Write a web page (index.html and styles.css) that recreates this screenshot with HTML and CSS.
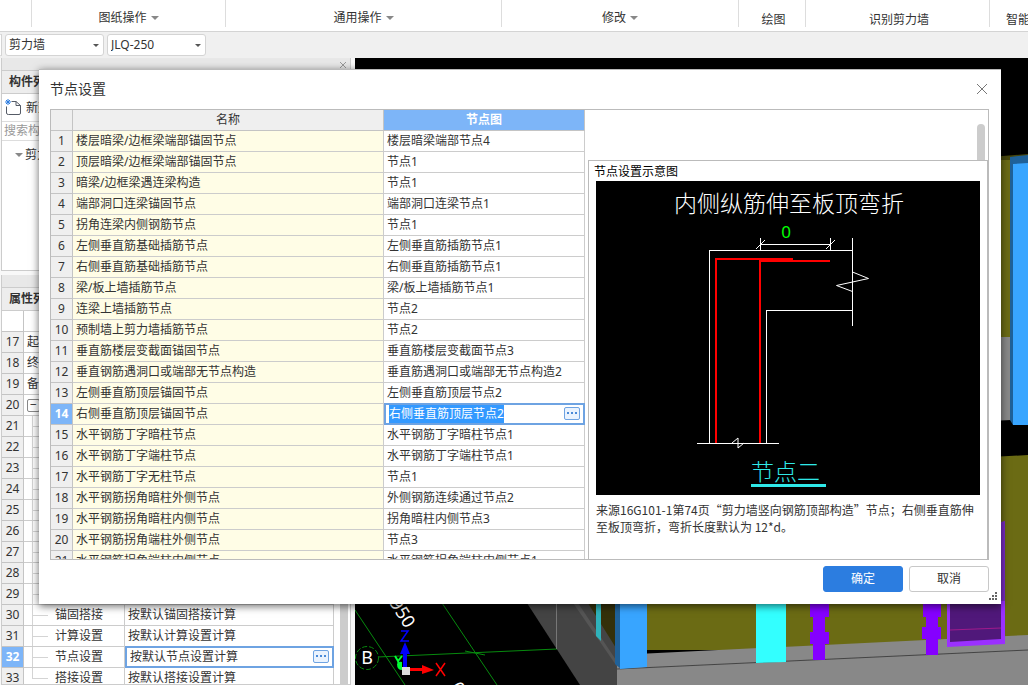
FILE: index.html
```html
<!DOCTYPE html>
<html lang="zh-CN">
<head>
  <meta charset="UTF-8" />
  <meta name="viewport" content="width=device-width, initial-scale=1.0"/>
  <title>节点设置</title>
  <link rel="stylesheet" href="styles.css">
</head>
<body>

  <nav class="ribbon">
    <div class="ribbon-group"></div>
    <div class="ribbon-group"><button class="ribbon-button">图纸操作 <i class="caret"></i></button></div>
    <div class="ribbon-group"><button class="ribbon-button">通用操作 <i class="caret"></i></button></div>
    <div class="ribbon-group"><button class="ribbon-button">修改 <i class="caret"></i></button></div>
    <div class="ribbon-group plain">绘图</div>
    <div class="ribbon-group plain">识别剪力墙</div>
    <div class="ribbon-group plain last">智能布置</div>
  </nav>

  <div class="toolbar">
    <span class="combo-end"></span>
    <label class="combo"><select aria-label="构件类型"><option>剪力墙</option></select></label>
    <label class="combo"><select aria-label="构件名称"><option>JLQ-250</option></select></label>
  </div>

  <div class="workspace">
    <aside class="sidebar">
      <section class="panel components">
        <div class="panel-bar">
          <svg width="8" height="8" viewBox="0 0 8 8"><path d="M1 1l6 6M7 1L1 7" stroke="#999" fill="none"/></svg>
        </div>
        <h2>构件列表</h2>
        <div class="panel-tools">
          <svg width="17" height="17" viewBox="0 0 17 17">
            <path d="M6.500 2.500h4.500l4.500 4v7.500q0 1.500-1.500 1.500H3.500Q1.500 15.500 1.500 14V7.500M11 2.500v4h4.500" stroke="#555b66" fill="none"/>
            <path d="M1 1l4 4M5 1L1 5M3 0v6M0 3h6" stroke="#2c7de0" fill="none"/>
          </svg>
          <span>新建</span>
        </div>
        <input class="search" type="text" placeholder="搜索构件..." aria-label="搜索构件">
        <div class="tree"><i class="caret"></i><span>剪力墙</span></div>
      </section>

      <section class="panel properties">
        <div class="panel-bar"></div>
        <h2>属性列表</h2>
        <div class="property-scroll">
          <table class="sheet property-sheet">
            <colgroup><col class="col-no"><col class="col-prop"><col></colgroup>
            <tr class="blank"><th></th><td></td><td></td></tr>
            <tr><th>17</th><td>起点底标高</td><td></td></tr>
            <tr><th>18</th><td>终点底标高</td><td></td></tr>
            <tr><th>19</th><td>备注</td><td></td></tr>
            <tr><th>20</th><td><button class="expander" aria-label="折叠">−</button></td><td></td></tr>
            <tr><th>21</th><td class="child"></td><td></td></tr>
            <tr><th>22</th><td class="child"></td><td></td></tr>
            <tr><th>23</th><td class="child"></td><td></td></tr>
            <tr><th>24</th><td class="child"></td><td></td></tr>
            <tr><th>25</th><td class="child"></td><td></td></tr>
            <tr><th>26</th><td class="child"></td><td></td></tr>
            <tr><th>27</th><td class="child"></td><td></td></tr>
            <tr><th>28</th><td class="child"></td><td></td></tr>
            <tr><th>29</th><td class="child"></td><td></td></tr>
            <tr><th>30</th><td class="child">锚固搭接</td><td>按默认锚固搭接计算</td></tr>
            <tr><th>31</th><td class="child">计算设置</td><td>按默认计算设置计算</td></tr>
            <tr class="active"><th>32</th><td class="child">节点设置</td><td class="edit">
              <div class="editor"><input type="text" value="按默认节点设置计算" aria-label="节点设置"><button class="more" aria-label="更多"><i></i><i></i><i></i></button></div>
            </td></tr>
            <tr><th>33</th><td class="child end">搭接设置</td><td>按默认搭接设置计算</td></tr>
          </table>
          <div class="property-track"></div>
        </div>
      </section>
    </aside>

    <main class="viewport">
      <svg class="scene" viewBox="355 58 673 627" preserveAspectRatio="xMinYMin slice">
        <rect x="355" y="58" width="673" height="627" fill="#000"/>
        <!-- right edge, behind the dialog -->
        <path d="M990 157l38-3v8h-38z" fill="#46460c"/>
        <path d="M990 160h20v177h-20zM990 457l38-2v180l-28 2z" fill="#6b6b14"/>
        <path d="M990 337h21v83l-21 1z" fill="#888"/>
        <path d="M1010 157l18-2v12h-15v258l-3-5z" fill="#1f6199"/>
        <path d="M1013 164l15-1v262h-15z" fill="#38a5ff"/>
        <!-- walls and floor -->
        <path d="M525 600h95v85h-40z" fill="#444"/>
        <path d="M571 600h5l42 63v5z" fill="#555"/>
        <path d="M586 600h30v48z" fill="#34300a"/>
        <path d="M596 600h5v41l-5-5z" fill="#2fb2bb"/>
        <path d="M620 590h408v60H620z" fill="#6b6b14"/>
        <path d="M617 655l411-20v50H617z" fill="#888"/>
        <path d="M617 669l411-19" stroke="#444" fill="none"/>
        <path d="M615 600h6v69l-6-5z" fill="#1f6199"/>
        <path d="M620 600h27v67l-27 2z" fill="#38a5ff"/>
        <path d="M756 600h30v62l-30 1z" fill="#3ff"/>
        <path d="M810 600h19v17h-4v15h4v12h-4v16h-12v-16h-3v-12h3v-15h-3z" fill="#8500ff"/>
        <path d="M923 600h18v17h-3v10h3v12h-3v16h-12v-16h-4v-12h4v-10h-3z" fill="#8500ff"/>
        <path d="M947 600h54v-76l4-2v122l-58 3z" fill="#9b30ff"/>
        <path d="M950 600h51v39l-51 3z" fill="#50187a"/>
        <path d="M950 630l51-2" stroke="#a01a8c" fill="none"/>
        <path d="M1001 522l4-1v80h-4z" fill="#7a2bc6"/>
        <!-- axis grid -->
        <path d="M355 610l50 75M442 603l55 82M355 658l202-9M465 651l20 4" stroke="#078a0e" fill="none"/>
        <path d="M556.500 600v49" stroke="#777" fill="none"/>
        <circle cx="367" cy="658" r="11.500" stroke="#078a0e" stroke-dasharray="5 2" fill="#000"/>
        <text x="367" y="664" class="axis-label" text-anchor="middle">B</text>
        <text x="0" y="0" class="axis-label" transform="translate(389 603) rotate(58)">950</text>
        <text x="0" y="0" class="axis-label" transform="translate(450 687) rotate(58)">0</text>
        <!-- coordinate gizmo -->
        <path d="M397 664q2-3 5-2v8q-5 0-5-6z" fill="#0f3"/>
        <path d="M403 668v-14h-3l5-12 5 12h-3v14z" fill="#00f"/>
        <path d="M409 668h13v-3l12 5-12 4v-3h-13z" fill="#f00"/>
        <rect x="402" y="667" width="8" height="8" fill="#ddd"/>
        <path d="M401 631h7l-7 10h8" stroke="#00f" stroke-width="1.500" fill="none"/>
        <path d="M436 663l9 13M445 663l-9 13" stroke="#f00" stroke-width="1.500" fill="none"/>
        <path d="M395 656l3 5 4-5M398 661l1 4" stroke="#0f3" stroke-width="2" fill="none"/>
      </svg>
    </main>
  </div>

  <div class="dialog" role="dialog" aria-labelledby="dialog-title">
    <header class="dialog-header">
      <h1 id="dialog-title">节点设置</h1>
      <button class="close" aria-label="关闭">
        <svg width="12" height="12" viewBox="0 0 12 12"><path d="M1 1l10 10M11 1L1 11" stroke="#777" fill="none"/></svg>
      </button>
    </header>

    <div class="dialog-body">
      <div class="node-scroll">
        <table class="sheet node-sheet">
          <colgroup><col class="col-no"><col class="col-name"><col></colgroup>
          <thead>
            <tr><th></th><th>名称</th><th class="current">节点图</th></tr>
          </thead>
          <tbody>
            <tr><th>1</th><td>楼层暗梁/边框梁端部锚固节点</td><td>楼层暗梁端部节点4</td></tr>
            <tr><th>2</th><td>顶层暗梁/边框梁端部锚固节点</td><td>节点1</td></tr>
            <tr><th>3</th><td>暗梁/边框梁遇连梁构造</td><td>节点1</td></tr>
            <tr><th>4</th><td>端部洞口连梁锚固节点</td><td>端部洞口连梁节点1</td></tr>
            <tr><th>5</th><td>拐角连梁内侧钢筋节点</td><td>节点1</td></tr>
            <tr><th>6</th><td>左侧垂直筋基础插筋节点</td><td>左侧垂直筋插筋节点1</td></tr>
            <tr><th>7</th><td>右侧垂直筋基础插筋节点</td><td>右侧垂直筋插筋节点1</td></tr>
            <tr><th>8</th><td>梁/板上墙插筋节点</td><td>梁/板上墙插筋节点1</td></tr>
            <tr><th>9</th><td>连梁上墙插筋节点</td><td>节点2</td></tr>
            <tr><th>10</th><td>预制墙上剪力墙插筋节点</td><td>节点2</td></tr>
            <tr><th>11</th><td>垂直筋楼层变截面锚固节点</td><td>垂直筋楼层变截面节点3</td></tr>
            <tr><th>12</th><td>垂直钢筋遇洞口或端部无节点构造</td><td>垂直筋遇洞口或端部无节点构造2</td></tr>
            <tr><th>13</th><td>左侧垂直筋顶层锚固节点</td><td>左侧垂直筋顶层节点2</td></tr>
            <tr class="active"><th>14</th><td>右侧垂直筋顶层锚固节点</td><td class="edit">
              <div class="editor"><input id="node-input" type="text" value="右侧垂直筋顶层节点2" aria-label="节点图"><button class="more" aria-label="更多"><i></i><i></i><i></i></button></div>
            </td></tr>
            <tr><th>15</th><td>水平钢筋丁字暗柱节点</td><td>水平钢筋丁字暗柱节点1</td></tr>
            <tr><th>16</th><td>水平钢筋丁字端柱节点</td><td>水平钢筋丁字端柱节点1</td></tr>
            <tr><th>17</th><td>水平钢筋丁字无柱节点</td><td>节点1</td></tr>
            <tr><th>18</th><td>水平钢筋拐角暗柱外侧节点</td><td>外侧钢筋连续通过节点2</td></tr>
            <tr><th>19</th><td>水平钢筋拐角暗柱内侧节点</td><td>拐角暗柱内侧节点3</td></tr>
            <tr><th>20</th><td>水平钢筋拐角端柱外侧节点</td><td>节点3</td></tr>
            <tr><th>21</th><td>水平钢筋拐角端柱内侧节点</td><td>水平钢筋拐角端柱内侧节点1</td></tr>
          </tbody>
        </table>
      </div>

      <div class="preview-column">
        <div class="preview-top"><span class="thumb"></span></div>
        <section class="preview">
          <h3>节点设置示意图</h3>
          <svg class="diagram" viewBox="596 181 384 314">
            <rect x="596" y="181" width="384" height="314" fill="#000"/>
            <text x="674" y="212" class="diagram-title">内侧纵筋伸至板顶弯折</text>
            <text x="786" y="238" class="diagram-zero" text-anchor="middle">0</text>
            <g fill="none" stroke="#fff" shape-rendering="crispEdges">
              <path d="M760.500 238v12M830.500 238v12M760 244.500h70"/>
              <path d="M709.500 443V250.500H853M852.500 238v88M766.500 443V310.500H852M697 443.500h82"/>
            </g>
            <g fill="none" stroke="#fff">
              <path d="M756 249l9-9M826 249l9-9"/>
              <path d="M852.500 272l16 6.500-32 7 16 6"/>
              <path d="M732 443l6-5v10l6-5"/>
            </g>
            <g fill="none" stroke="#f00" stroke-width="2">
              <path d="M716 443V259h77M760 443V261h70"/>
            </g>
            <text x="751" y="480" class="diagram-name">节点二</text>
            <path d="M751 485.500h75" stroke="#2fe8e8" stroke-width="3"/>
          </svg>
          <p>来源16G101-1第74页“剪力墙竖向钢筋顶部构造”节点；右侧垂直筋伸至板顶弯折，弯折长度默认为 12*d。</p>
        </section>
      </div>
    </div>

    <footer class="dialog-footer">
      <button class="btn primary">确定</button>
      <button class="btn">取消</button>
    </footer>
    <svg class="grip" width="9" height="9" viewBox="0 0 9 9"><path d="M6 0h2v2H6zM6 3h2v2H6zM3 3h2v2H3zM0 6h2v2H0zM3 6h2v2H3zM6 6h2v2H6z" fill="#666"/></svg>
  </div>

  <script>
    const nodeInput = document.getElementById('node-input');
    nodeInput.focus();
    nodeInput.select();
  </script>
</body>
</html>
```
FILE: styles.css
```css
* {
  box-sizing: border-box;
}

body {
  margin: 0;
  height: 100vh;
  display: flex;
  flex-direction: column;
  overflow: hidden;
  background: #f0f0f0;
  color: #333;
  font: 12px/20px "Noto Sans", "Noto Sans CJK SC", sans-serif;
}

button, input, select {
  font: inherit;
  color: inherit;
}

h1, h2, h3, p {
  margin: 0;
  font-size: 12px;
}

.caret {
  display: inline-block;
  border: 4px solid transparent;
  border-top-color: #888;
  border-bottom: 0;
  vertical-align: middle;
}

/* ribbon */
.ribbon {
  display: grid;
  grid-template-columns: 32fr 194fr 276fr 237fr 67fr 184fr 38fr;
  flex: none;
  height: 32px;
  padding-bottom: 4px;
  background: #fff;
  border-bottom: 1px solid #d4d4d4;
}

.ribbon-group {
  min-width: 0;
  height: 27px;
  border-right: 1px solid #ddd;
  padding-top: 8px;
  text-align: center;
  white-space: nowrap;
}

.ribbon-group.plain {
  padding: 10px 0 0 3px;
}

.ribbon-group.last {
  padding-left: 16px;
  border: 0;
  text-align: left;
}

.ribbon-button {
  border: 0;
  padding: 0;
  background: none;
}

.ribbon-button .caret {
  margin: -2px 0 0 1px;
}

/* toolbar */
.toolbar {
  display: flex;
  flex: none;
  gap: 3px;
  height: 26px;
  padding: 2px 0;
}

.combo,
.combo-end {
  display: flex;
  align-items: center;
  height: 22px;
  background: #fff;
  border: 1px solid #d4d4d4;
  border-radius: 3px;
}

.combo-end {
  width: 2px;
  border-width: 1px 1px 1px 0;
}

.combo {
  width: 99px;
  padding-right: 4px;
}

.combo select {
  flex: 1;
  min-width: 0;
  height: 20px;
  border: 0;
  padding: 0 3px;
  background: none;
  appearance: none;
}

.combo::after {
  content: "";
  border: 3px solid transparent;
  border-top-color: #555;
  border-bottom: 0;
}

/* workspace */
.workspace {
  display: flex;
  flex: 1;
  min-height: 0;
}

.sidebar {
  display: flex;
  flex-direction: column;
  flex: none;
  gap: 4px;
  width: 355px;
  padding: 0 4px 0 1px;
  background: #f8f8f8;
}

.panel {
  display: flex;
  flex-direction: column;
  background: #fff;
  border: 1px solid #ccc;
  border-top: 0;
}

.components {
  flex: none;
  height: 213px;
}

.properties {
  flex: 1;
  min-height: 0;
}

.panel-bar {
  flex: none;
  height: 13px;
  padding: 3px 3px 0;
  background: #e8e8e8;
  border-bottom: 1px solid #ccc;
  text-align: right;
  line-height: 8px;
}

.panel h2 {
  flex: none;
  height: 23px;
  padding: 1px 7px;
  background: #ededed;
  border-bottom: 1px solid #ccc;
}

.panel-tools {
  display: flex;
  align-items: center;
  flex: none;
  gap: 4px;
  height: 27px;
  padding-left: 3px;
}

.search {
  flex: none;
  height: 20px;
  border: 1px solid #ddd;
  border-width: 1px 0;
  padding: 0 2px;
}

.search::placeholder {
  color: #999;
}

.tree {
  display: flex;
  align-items: center;
  gap: 2px;
  padding: 4px 13px;
}

/* sheets */
.sheet {
  table-layout: fixed;
  border-collapse: separate;
  border-spacing: 0;
}

.sheet th,
.sheet td {
  height: 21px;
  padding: 0 3px;
  border: 1px solid #ccc;
  border-width: 0 1px 1px 0;
  line-height: 20px;
  text-align: left;
  font-weight: normal;
  white-space: nowrap;
}

.sheet th {
  padding: 0;
  background: #efefef;
  border-color: #c4c4c4;
  text-align: center;
}

.sheet .active th,
.sheet th.current {
  background: #7db5f8;
  color: #fff;
  font-weight: bold;
}

.col-no {
  width: 22px;
}

.sheet td.edit {
  padding: 0 0 0 1px;
}

.editor {
  display: flex;
  align-items: center;
  height: 20px;
  border: 1px solid #6ea3e2;
  background: #fff;
  box-shadow: 0 0 0 1px #6ea3e2;
}

.editor input {
  flex: 1;
  min-width: 0;
  height: 18px;
  border: 0;
  padding: 0 3px;
  outline: 0;
  background: none;
}

.editor input::selection {
  background: #3399ff;
  color: #fff;
}

.more {
  display: flex;
  align-items: center;
  justify-content: center;
  flex: none;
  gap: 2px;
  width: 16px;
  height: 13px;
  margin: -2px 3px 0 0;
  border: 1px solid #6ea3e2;
  border-radius: 2px;
  padding: 0;
  background: #eaf3fe;
}

.more i {
  width: 2px;
  height: 2px;
  background: #4a8ad8;
}

.property-scroll {
  display: flex;
  flex: 1;
  min-height: 0;
  overflow: hidden;
}

.property-sheet {
  flex: 1;
}

.col-prop {
  width: 101px;
}

.property-track {
  width: 8px;
  margin: 0 2px 0 6px;
  background: #ccc;
}

.sheet .blank th {
  background: #fff;
}

.sheet .child {
  padding-left: 31px;
  background:
    linear-gradient(#d4d4d4, #d4d4d4) 8px 0 / 1px 100% no-repeat,
    linear-gradient(#d4d4d4, #d4d4d4) 8px 10px / 16px 1px no-repeat;
}

.sheet .child.end {
  background:
    linear-gradient(#d4d4d4, #d4d4d4) 8px 0 / 1px 10px no-repeat,
    linear-gradient(#d4d4d4, #d4d4d4) 8px 10px / 16px 1px no-repeat;
}

.expander {
  display: block;
  width: 13px;
  height: 13px;
  border: 1px solid #888;
  border-radius: 2px;
  padding: 0;
  background: #fff;
  line-height: 10px;
}

/* 3D view */
.viewport {
  flex: 1;
  min-width: 0;
  background: #000;
}

.scene {
  display: block;
  width: 100%;
  height: 100%;
}

.axis-label {
  fill: #fff;
  font-size: 18px;
}

/* dialog */
.dialog {
  position: absolute;
  inset: 69px 27px 81px 39px;
  display: flex;
  flex-direction: column;
  padding: 0 12px 12px 11px;
  background: #fff;
  border-top: 1px solid #bbb;
  box-shadow: 0 2px 8px rgba(0, 0, 0, 0.6);
}

.dialog-header {
  display: flex;
  align-items: center;
  justify-content: space-between;
  flex: none;
  height: 39px;
  padding: 0 1px 2px 0;
}

.dialog-header h1 {
  font-size: 14px;
  font-weight: normal;
}

.close {
  display: flex;
  border: 0;
  padding: 0;
  background: none;
}

.dialog-body {
  display: flex;
  flex: 1;
  min-height: 0;
  border: 1px solid #bbb;
}

.node-scroll {
  flex: none;
  width: 534px;
  overflow: hidden;
}

.node-sheet {
  width: 534px;
}

.col-name {
  width: 311px;
}

.node-sheet td:nth-child(2) {
  background: #fffde6;
}

.preview-column {
  display: flex;
  flex-direction: column;
  flex: 1;
  min-width: 0;
  padding-left: 3px;
}

.preview-top {
  display: flex;
  justify-content: flex-end;
  flex: none;
  height: 50px;
  padding: 14px 3px 0;
}

.thumb {
  width: 8px;
  background: #ccc;
  border-radius: 4px 4px 0 0;
}

.preview {
  flex: 1;
  min-height: 0;
  padding: 2px 7px 0;
  border: 1px solid #bbb;
  border-width: 1px 1px 0 1px;
}

.preview h3 {
  margin-left: -2px;
  font-weight: normal;
  color: #000;
  line-height: 18px;
}

.diagram {
  display: block;
  width: 100%;
}

.diagram-title {
  fill: #fff;
  font-size: 23px;
  font-weight: 300;
}

.diagram-zero {
  fill: #0f0;
  font-size: 17px;
}

.diagram-name {
  fill: #2fe8e8;
  font-size: 23px;
  font-weight: 300;
}

.preview p {
  margin-top: 6px;
  font-family: "Noto Sans CJK SC", sans-serif;
  line-height: 17px;
}

.dialog-footer {
  display: flex;
  justify-content: flex-end;
  flex: none;
  gap: 6px;
  padding-top: 6px;
}

.btn {
  width: 80px;
  height: 26px;
  border: 1px solid #c8c8c8;
  border-radius: 3px;
  padding: 0;
  background: #fff;
}

.btn.primary {
  background: #2c7de0;
  border-color: #2c7de0;
  color: #fff;
}

.grip {
  position: absolute;
  right: 3px;
  bottom: 3px;
}
```
